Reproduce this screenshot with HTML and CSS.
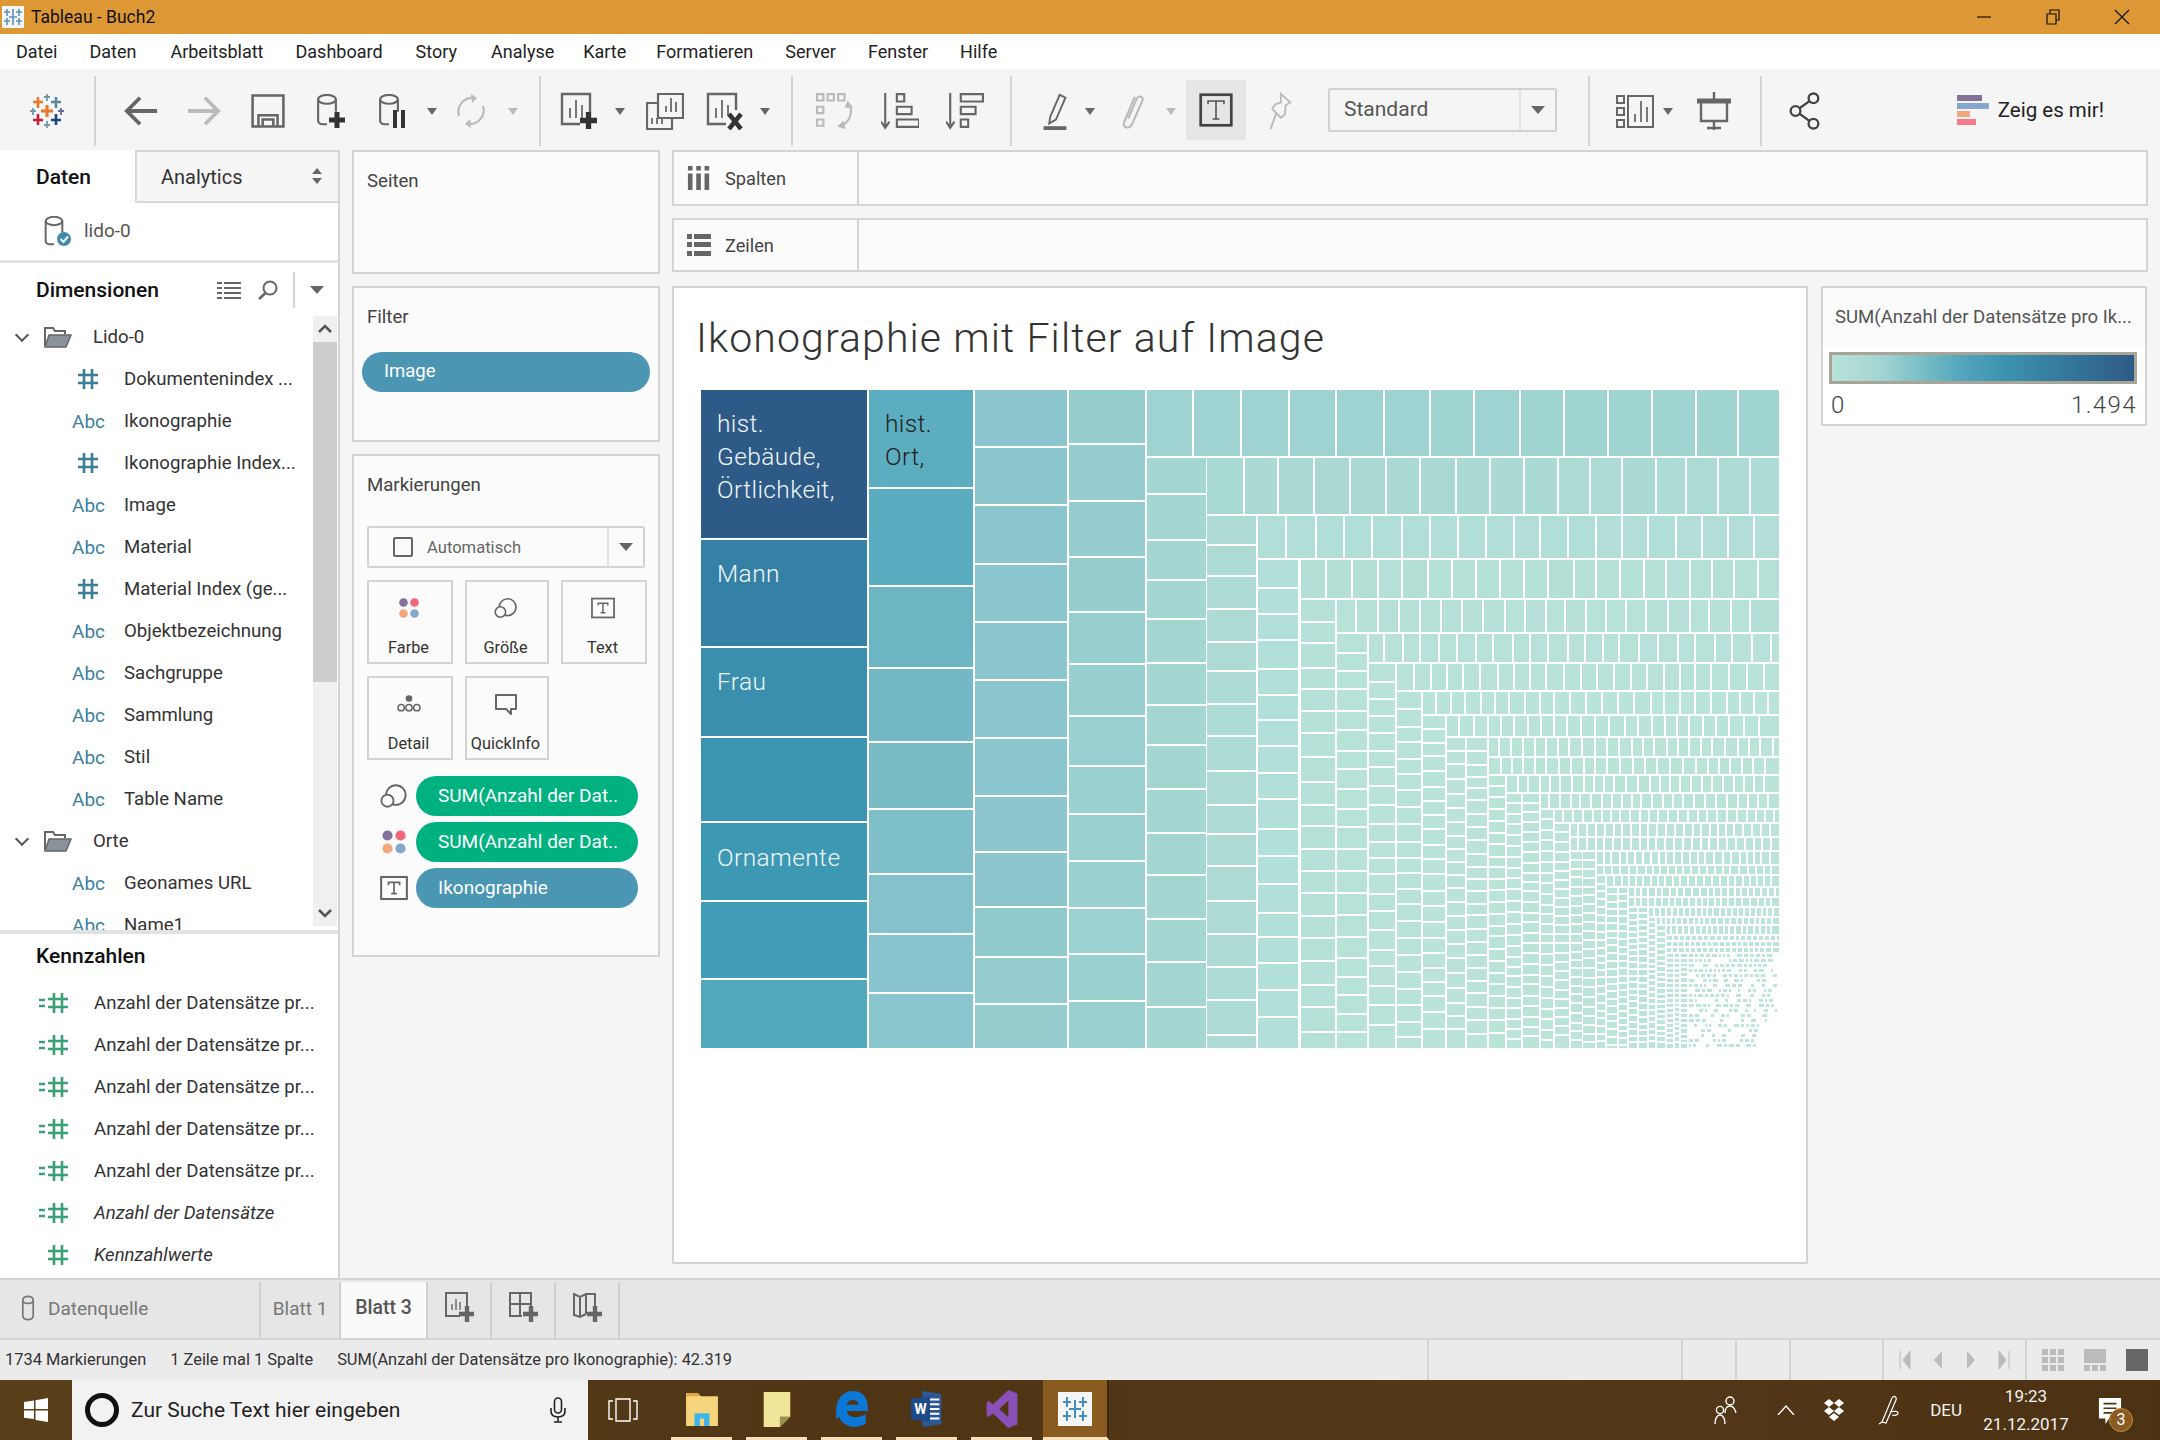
FILE: index.html
```html
<!DOCTYPE html>
<html>
<head>
    <meta charset="UTF-8">
    <title>Tableau - Buch2</title>
    <link rel="stylesheet" href="styles.css">
</head>
<body>
<svg class="defs" width="0" height="0">
    <defs>
        <symbol id="hash" viewBox="0 0 22 22">
            <path d="M7 1v20M15 1v20M1 7h20M1 15h20" fill="none" stroke="currentColor" stroke-width="2.6"/>
        </symbol>
        <symbol id="measure" viewBox="0 0 30 22">
            <path d="M0 8h6M0 14h6" fill="none" stroke="currentColor" stroke-width="2.4"/>
            <path d="M15 1v20M23 1v20M9 7h20M9 15h20" fill="none" stroke="currentColor" stroke-width="2.6"/>
        </symbol>
        <symbol id="folder" viewBox="0 0 28 22">
            <path d="M1 20V2h8l2 3h10v3" fill="none" stroke="#666" stroke-width="2"/>
            <path d="M1 21l4-12h22l-5 12z" fill="#8b929c" stroke="#666" stroke-width="1.5"/>
        </symbol>
        <symbol id="cyl" viewBox="0 0 24 36">
            <ellipse cx="12" cy="6" rx="10" ry="5" fill="none" stroke="currentColor" stroke-width="2.4"/>
            <path d="M2 6v24c0 2 2 4 5 4h5M22 6v14" fill="none" stroke="currentColor" stroke-width="2.4"/>
        </symbol>
        <symbol id="bubbles" viewBox="0 0 30 26">
            <circle cx="17" cy="12" r="10.5" fill="none" stroke="#666" stroke-width="2"/>
            <circle cx="8" cy="18" r="6.5" fill="#fbfbfb" stroke="#666" stroke-width="2"/>
        </symbol>
        <symbol id="dots" viewBox="0 0 28 28">
            <circle cx="7" cy="7" r="5.5" fill="#85729a"/>
            <circle cx="21" cy="7" r="5.5" fill="#f2667d"/>
            <circle cx="7" cy="21" r="5.5" fill="#f2a77c"/>
            <circle cx="21" cy="21" r="5.5" fill="#86a8cf"/>
        </symbol>
        <symbol id="tbox" viewBox="0 0 30 26">
            <rect x="1.2" y="1.2" width="27.6" height="23.6" fill="none" stroke="#666" stroke-width="2.2"/>
            <path d="M9 10V7h12v3M15 7v12M12 19h6" fill="none" stroke="#666" stroke-width="1.8"/>
        </symbol>
        <symbol id="plus" viewBox="0 0 16 16">
            <path d="M8 0v16M0 8h16" fill="none" stroke="#333" stroke-width="5"/>
        </symbol>
    </defs>
</svg>

<div class="window">
    <header class="titlebar">
        <div class="title-left">
            <svg class="app-icon" viewBox="0 0 22 22">
                <rect width="22" height="22" fill="#f4f4f4"/>
                <path d="M11 3v16M7 11h8M5 3v7M2 6h6M17 3v7M14 6h6M5 12v7M2 15h6M17 12v7M14 15h6" stroke="#5b94b8" stroke-width="1.6"/>
            </svg>
            <span>Tableau - Buch2</span>
        </div>
        <div class="win-controls">
            <svg viewBox="0 0 16 16"><path d="M1 8h14" stroke="#111" stroke-width="1.2"/></svg>
            <svg viewBox="0 0 16 16"><path d="M2 5h9v10H2zM5 5V1h9v10h-3" fill="none" stroke="#111" stroke-width="1.2"/></svg>
            <svg viewBox="0 0 16 16"><path d="M1 1l14 14M15 1L1 15" stroke="#111" stroke-width="1.2"/></svg>
        </div>
    </header>

    <nav class="menubar">
        <span>Datei</span><span>Daten</span><span>Arbeitsblatt</span><span>Dashboard</span><span>Story</span><span>Analyse</span><span>Karte</span><span>Formatieren</span><span>Server</span><span>Fenster</span><span>Hilfe</span>
    </nav>

    <div class="toolbar">
        <div class="tb-group tb-logo">
            <svg class="i-logo" viewBox="0 0 34 34">
                <path d="M17 11v12M11 17h12" stroke="#e8762b" stroke-width="3"/>
                <path d="M8 3v11M3 8h10" stroke="#e8762b" stroke-width="2.6"/>
                <path d="M26 3v11M21 8h10" stroke="#5b879b" stroke-width="2.6"/>
                <path d="M8 20v11M3 26h10" stroke="#c72037" stroke-width="2.6"/>
                <path d="M26 20v11M21 26h10" stroke="#1f447e" stroke-width="2.6"/>
                <path d="M17 0v7M14 3h6M17 27v7M14 31h6" stroke="#7199a9" stroke-width="1.8"/>
                <path d="M3 14v7M0 17h6" stroke="#7199a9" stroke-width="1.8"/>
                <path d="M31 14v7M28 17h6" stroke="#6a6a9a" stroke-width="1.8"/>
            </svg>
        </div>
        <div class="tb-group tb-nav">
            <svg class="i-34" viewBox="0 0 36 32"><path d="M35 16H4M17 2L3 16l14 14" fill="none" stroke="#666" stroke-width="4"/></svg>
            <svg class="i-34" viewBox="0 0 36 32"><path d="M1 16h31M19 2l14 14-14 14" fill="none" stroke="#bbb" stroke-width="4"/></svg>
            <svg class="i-34" viewBox="0 0 32 32"><path d="M1.5 1.5h29v29h-29z" fill="none" stroke="#666" stroke-width="2.4"/><path d="M7 30V20h18v10M11 30v-6h10v6" fill="none" stroke="#666" stroke-width="2.4"/></svg>
            <svg class="i-34" viewBox="0 0 32 34"><use href="#cyl" class="c-gray" width="24" height="32" x="0" y="0"/><use href="#plus" x="14" y="18" width="16" height="16"/></svg>
            <svg class="i-34" viewBox="0 0 32 34"><use href="#cyl" class="c-gray" width="24" height="32" x="0" y="0"/><path d="M18 16v18M26 16v18" stroke="#333" stroke-width="4"/></svg>
            <i class="caret"></i>
            <svg class="i-34" viewBox="0 0 34 34"><path d="M5 22C2 12 10 3 20 4M29 12c3 10-5 19-15 18" fill="none" stroke="#bbb" stroke-width="2.2"/><path d="M17 0l6 4-5 5zM17 34l-6-4 5-5z" fill="#bbb"/></svg>
            <i class="caret caret-off"></i>
        </div>
        <div class="tb-group tb-sheet">
            <svg class="i-38" viewBox="0 0 38 38"><path d="M20 32H2V2h28v18" fill="none" stroke="#666" stroke-width="2.4"/><path d="M10 26V16M16 26V8M22 26V13" stroke="#777" stroke-width="2"/><use href="#plus" x="20" y="20" width="17" height="17"/></svg>
            <i class="caret"></i>
            <svg class="i-38" viewBox="0 0 38 38"><path d="M12 2h25v24H12z" fill="#f5f5f5" stroke="#666" stroke-width="2.2"/><path d="M20 20v-6M25 20V6M30 20V10" stroke="#777" stroke-width="2"/><path d="M12 11H1v26h25V26" fill="none" stroke="#666" stroke-width="2.2"/><path d="M6 32v-6M11 32v-6M16 32v-6" stroke="#777" stroke-width="2"/></svg>
            <svg class="i-38" viewBox="0 0 38 38"><path d="M20 32H2V2h28v16" fill="none" stroke="#666" stroke-width="2.4"/><path d="M10 26V16M16 26V8M22 24V13" stroke="#777" stroke-width="2"/><path d="M23 22l12 15M35 22L23 37" stroke="#333" stroke-width="4.5"/></svg>
            <i class="caret"></i>
        </div>
        <div class="tb-group tb-sort">
            <svg class="i-38" viewBox="0 0 36 36"><g fill="none" stroke="#bbb" stroke-width="2"><path d="M1 2h6v6H1zM11 2h6v6h-6zM21 2h6v6h-6zM1 14h6v6H1zM1 26h6v6H1z"/><path d="M32 12c3 8 0 16-8 20"/></g><path d="M30 8l5 7-8 0zM20 33l6-6 2 8z" fill="#bbb"/></svg>
            <svg class="i-38" viewBox="0 0 36 36"><path d="M4 1v32M0 28l4 6 4-6" fill="none" stroke="#666" stroke-width="2"/><g fill="none" stroke="#666" stroke-width="2"><path d="M15 2h7v7h-7zM15 14h14v7H15zM15 26h21v7H15z"/></g></svg>
            <svg class="i-38" viewBox="0 0 36 36"><path d="M4 1v32M0 28l4 6 4-6" fill="none" stroke="#666" stroke-width="2"/><g fill="none" stroke="#666" stroke-width="2"><path d="M14 2h21v7H14zM14 14h14v7H14zM14 26h7v7h-7z"/></g></svg>
        </div>
        <div class="tb-group tb-format">
            <svg class="i-38" viewBox="0 0 30 40"><path d="M10 26L20 3l6 3-10 23-7 4z" fill="none" stroke="#666" stroke-width="2"/><path d="M3 38h24" stroke="#666" stroke-width="4"/></svg>
            <i class="caret"></i>
            <svg class="i-38" viewBox="0 0 30 40"><path d="M11 28L20 7c2-4 8-2 6 2L15 34c-3 6-11 3-8-3L18 5" fill="none" stroke="#bbb" stroke-width="2.2"/></svg>
            <i class="caret caret-off"></i>
            <span></span>
            <div class="tool-on"><svg class="i-34" viewBox="0 0 30 30"><rect x="1.5" y="1.5" width="27" height="27" fill="none" stroke="#444" stroke-width="2.4"/><path d="M8 10V7h14v3M15 7v16M12 23h6" fill="none" stroke="#555" stroke-width="1.4"/></svg></div>
            <svg class="i-38" viewBox="0 0 30 40"><path d="M17 2l10 9-5 3-1 10-4 3-9-9 3-5 6-2z" fill="none" stroke="#bbb" stroke-width="2"/><path d="M12 23l-6 16" stroke="#bbb" stroke-width="2"/></svg>
            <span></span>
            <div class="select">
                <span class="select-text">Standard</span>
                <span class="select-btn"><i class="caret caret-lg"></i></span>
            </div>
        </div>
        <div class="tb-group tb-view">
            <svg class="i-38" viewBox="0 0 38 38"><g fill="none" stroke="#666" stroke-width="2"><path d="M1 4h7v7H1zM1 16h7v7H1zM1 28h7v7H1zM12 4h25v31H12z"/></g><path d="M19 30v-8M25 30V9M31 30V15" stroke="#777" stroke-width="2"/></svg>
            <i class="caret"></i>
            <svg class="i-38" viewBox="0 0 36 38"><path d="M1 9h34" stroke="#666" stroke-width="5"/><path d="M5 11v18h26V11M18 0v8M18 29v9M11 36h14" fill="none" stroke="#666" stroke-width="2.4"/></svg>
        </div>
        <div class="tb-group tb-end">
            <svg class="i-38" viewBox="0 0 30 36"><g fill="none" stroke="#444" stroke-width="2.2"><circle cx="6" cy="18" r="4.6"/><circle cx="23" cy="6" r="4.6"/><circle cx="23" cy="30" r="4.6"/><path d="M9.8 15.4L19.2 8.6M9.8 20.6l9.4 6.8"/></g></svg>
            <div class="showme">
                <div class="showme-bars"><i class="b1"></i><i class="b2"></i><i class="b3"></i><i class="b4"></i></div>
                <span>Zeig es mir!</span>
            </div>
        </div>
    </div>

    <main class="workspace">
        <aside class="datapane">
            <div class="pane-tabs">
                <div class="pane-tab">Daten</div>
                <div class="pane-tab pane-tab-off">
                    <span>Analytics</span>
                    <svg class="updown" viewBox="0 0 12 16"><path d="M6 0l5 6H1zM6 16l5-6H1z" fill="#666"/></svg>
                </div>
            </div>
            <div class="source">
                <svg class="source-icon" viewBox="0 0 28 30"><use href="#cyl" class="c-gray" width="20" height="30"/><circle cx="20" cy="23" r="7" fill="#3d8bac"/><path d="M16.5 23l3 3 4.5-5.5" fill="none" stroke="#fff" stroke-width="2"/></svg>
                <span>lido-0</span>
            </div>
            <div class="dim-head">
                <h2>Dimensionen</h2>
                <svg class="i-list" viewBox="0 0 24 18"><path d="M0 2h5M7 2h17M0 7h5M7 7h17M0 12h5M7 12h17M0 17h5M7 17h17" stroke="#666" stroke-width="2"/></svg>
                <svg class="i-find" viewBox="0 0 20 20"><circle cx="12" cy="8" r="6.5" fill="none" stroke="#666" stroke-width="2"/><path d="M7.5 13L1 19" stroke="#666" stroke-width="2.6"/></svg>
                <i class="dim-sep"></i>
                <i class="caret caret-lg"></i>
            </div>
            <div class="dim-body">
                <ul class="fields">
                    <li class="folder"><i class="chev"></i><svg class="i-folder"><use href="#folder"/></svg><span>Lido-0</span></li>
                    <li><svg class="t-hash"><use href="#hash"/></svg><span>Dokumentenindex ...</span></li>
                    <li><b class="t-abc">Abc</b><span>Ikonographie</span></li>
                    <li><svg class="t-hash"><use href="#hash"/></svg><span>Ikonographie Index...</span></li>
                    <li><b class="t-abc">Abc</b><span>Image</span></li>
                    <li><b class="t-abc">Abc</b><span>Material</span></li>
                    <li><svg class="t-hash"><use href="#hash"/></svg><span>Material Index (ge...</span></li>
                    <li><b class="t-abc">Abc</b><span>Objektbezeichnung</span></li>
                    <li><b class="t-abc">Abc</b><span>Sachgruppe</span></li>
                    <li><b class="t-abc">Abc</b><span>Sammlung</span></li>
                    <li><b class="t-abc">Abc</b><span>Stil</span></li>
                    <li><b class="t-abc">Abc</b><span>Table Name</span></li>
                    <li class="folder"><i class="chev"></i><svg class="i-folder"><use href="#folder"/></svg><span>Orte</span></li>
                    <li><b class="t-abc">Abc</b><span>Geonames URL</span></li>
                    <li><b class="t-abc">Abc</b><span>Name1</span></li>
                </ul>
                <div class="scrollbar">
                    <div class="sb-btn"><svg viewBox="0 0 14 10"><path d="M1 8l6-6 6 6" fill="none" stroke="#555" stroke-width="2.6"/></svg></div>
                    <div class="sb-thumb"></div>
                    <div class="sb-rest"></div>
                    <div class="sb-btn"><svg viewBox="0 0 14 10"><path d="M1 2l6 6 6-6" fill="none" stroke="#555" stroke-width="2.6"/></svg></div>
                </div>
            </div>
            <div class="kz">
                <h2>Kennzahlen</h2>
                <ul class="fields measures">
                    <li><svg class="t-measure"><use href="#measure"/></svg><span>Anzahl der Datensätze pr...</span></li>
                    <li><svg class="t-measure"><use href="#measure"/></svg><span>Anzahl der Datensätze pr...</span></li>
                    <li><svg class="t-measure"><use href="#measure"/></svg><span>Anzahl der Datensätze pr...</span></li>
                    <li><svg class="t-measure"><use href="#measure"/></svg><span>Anzahl der Datensätze pr...</span></li>
                    <li><svg class="t-measure"><use href="#measure"/></svg><span>Anzahl der Datensätze pr...</span></li>
                    <li><svg class="t-measure"><use href="#measure"/></svg><span class="ital">Anzahl der Datensätze</span></li>
                    <li><svg class="t-measure-h"><use href="#hash"/></svg><span class="ital">Kennzahlwerte</span></li>
                </ul>
            </div>
        </aside>

        <section class="cards">
            <div class="card card-pages"><h3>Seiten</h3></div>
            <div class="card card-filter">
                <h3>Filter</h3>
                <div class="pill pill-blue pill-wide">Image</div>
            </div>
            <div class="card card-marks">
                <h3>Markierungen</h3>
                <div class="marktype">
                    <i class="mark-check"></i>
                    <span class="marktype-text">Automatisch</span>
                    <span class="marktype-btn"><i class="caret caret-lg"></i></span>
                </div>
                <div class="markgrid">
                    <div class="markbtn"><svg class="m-ic"><use href="#dots"/></svg><span>Farbe</span></div>
                    <div class="markbtn"><svg class="m-ic"><use href="#bubbles"/></svg><span>Größe</span></div>
                    <div class="markbtn"><svg class="m-ic"><use href="#tbox"/></svg><span>Text</span></div>
                    <div class="markbtn">
                        <svg class="m-ic" viewBox="0 0 26 22"><circle cx="13" cy="5" r="3.6" fill="#666"/><g fill="none" stroke="#666" stroke-width="1.6"><circle cx="4.5" cy="15" r="3.4"/><circle cx="13" cy="15" r="3.4"/><circle cx="21.5" cy="15" r="3.4"/></g></svg>
                        <span>Detail</span>
                    </div>
                    <div class="markbtn">
                        <svg class="m-ic" viewBox="0 0 24 22"><path d="M2 2h20v14h-5v5l-5-5H2z" fill="none" stroke="#666" stroke-width="2" stroke-linejoin="round"/></svg>
                        <span>QuickInfo</span>
                    </div>
                </div>
                <div class="markrow"><svg class="mr-ic"><use href="#bubbles"/></svg><div class="pill pill-green">SUM(Anzahl der Dat..</div></div>
                <div class="markrow"><svg class="mr-ic"><use href="#dots"/></svg><div class="pill pill-green">SUM(Anzahl der Dat..</div></div>
                <div class="markrow"><svg class="mr-ic"><use href="#tbox"/></svg><div class="pill pill-blue">Ikonographie</div></div>
            </div>
        </section>

        <section class="sheet">
            <div class="shelf">
                <div class="shelf-label">
                    <svg class="shelf-ic" viewBox="0 0 24 26"><path d="M0 0h5v5H0zM9 0h5v5H9zM18 0h5v5h-5zM0 8h5v18H0zM9 8h5v18H9zM18 8h5v18h-5z" fill="#666"/></svg>
                    <span>Spalten</span>
                </div>
            </div>
            <div class="shelf">
                <div class="shelf-label">
                    <svg class="shelf-ic" viewBox="0 0 24 22"><path d="M0 0h5v5H0zM7 0h17v5H7zM0 8h5v5H0zM7 8h17v5H7zM0 17h5v5H0zM7 17h17v5H7z" fill="#666"/></svg>
                    <span>Zeilen</span>
                </div>
            </div>
            <div class="sheet-main">
                <div class="viz">
                    <h1>Ikonographie mit Filter auf Image</h1>
                    <div class="treemap" id="treemap">
                        <div class="tm-label tm-a">hist.<br>Gebäude,<br>Örtlichkeit,</div>
                        <div class="tm-label tm-b">Mann</div>
                        <div class="tm-label tm-c">Frau</div>
                        <div class="tm-label tm-d">Ornamente</div>
                        <div class="tm-label tm-e">hist.<br>Ort,</div>
                    </div>
                </div>
                <div class="legend">
                    <div class="legend-title">SUM(Anzahl der Datensätze pro Ik...</div>
                    <div class="legend-bar"></div>
                    <div class="legend-vals"><span>0</span><span>1.494</span></div>
                </div>
            </div>
        </section>
    </main>

    <div class="tabsbar">
        <div class="tab tab-source">
            <svg class="i-tabcyl" viewBox="0 0 16 30"><path d="M2 6v18c0 6 12 6 12 0V6c0-6-12-6-12 0c0 5 12 5 12 0" fill="none" stroke="#777" stroke-width="2"/></svg>
            <span>Datenquelle</span>
        </div>
        <div class="tab tab-b1">Blatt 1</div>
        <div class="tab tab-b3">Blatt 3</div>
        <div class="tab tab-add"><svg class="i-add" viewBox="0 0 30 30"><path d="M16 24H2V1h21v13" fill="none" stroke="#666" stroke-width="2"/><path d="M8 18v-6M12 18V7M16 18v-8" stroke="#777" stroke-width="1.6"/><path d="M23 14v16M15 22h16" stroke="#666" stroke-width="4.4"/></svg></div>
        <div class="tab tab-add"><svg class="i-add" viewBox="0 0 30 30"><path d="M14 24H2V1h21v13M2 12h21M12 1v23" fill="none" stroke="#666" stroke-width="2"/><path d="M23 14v16M15 22h16" stroke="#666" stroke-width="4.4"/></svg></div>
        <div class="tab tab-add"><svg class="i-add" viewBox="0 0 30 30"><path d="M14 22l-6 3-6-2V2l6 3 6-3 9 0v12M8 5v20M14 2v20" fill="none" stroke="#666" stroke-width="2"/><path d="M23 14v16M15 22h16" stroke="#666" stroke-width="4.4"/></svg></div>
    </div>

    <footer class="statusbar">
        <div class="status-text">
            <span>1734 Markierungen</span>
            <span>1 Zeile mal 1 Spalte</span>
            <span>SUM(Anzahl der Datensätze pro Ikonographie): 42.319</span>
        </div>
        <div class="status-cells"><i class="sc1"></i><i class="sc2"></i><i class="sc3"></i><i class="sc4"></i></div>
        <div class="status-nav">
            <svg viewBox="0 0 12 18"><path d="M1 0v18M11 0v18L4 9z" fill="#bbb" stroke="#bbb"/></svg>
            <svg viewBox="0 0 12 18"><path d="M10 0v18L2 9z" fill="#bbb"/></svg>
            <svg viewBox="0 0 12 18"><path d="M2 0v18l8-9z" fill="#bbb"/></svg>
            <svg viewBox="0 0 12 18"><path d="M11 0v18M1 0v18l7-9z" fill="#bbb" stroke="#bbb"/></svg>
        </div>
        <div class="status-view">
            <svg viewBox="0 0 22 22"><path d="M0 0h6v6H0zM8 0h6v6H8zM16 0h6v6h-6zM0 8h6v6H0zM8 8h6v6H8zM16 8h6v6h-6zM0 16h6v6H0zM8 16h6v6H8zM16 16h6v6h-6z" fill="#bbb"/></svg>
            <svg viewBox="0 0 22 22"><path d="M0 0h22v14H0zM0 16h6v6H0zM8 16h6v6H8zM16 16h6v6h-6z" fill="#bbb"/></svg>
            <svg viewBox="0 0 22 22"><path d="M0 0h22v22H0z" fill="#666"/></svg>
        </div>
    </footer>

    <div class="taskbar">
        <div class="task-start">
            <svg viewBox="0 0 24 24"><path d="M0 4l10-1.5V11H0zM11.5 2.3L24 0v11H11.5zM0 12.5h10V21L0 19.7zM11.5 12.5H24V24l-12.5-2z" fill="#fff"/></svg>
        </div>
        <div class="task-search">
            <i class="cortana"></i>
            <span>Zur Suche Text hier eingeben</span>
            <svg class="mic" viewBox="0 0 16 26"><rect x="4.5" y="1" width="7" height="15" rx="3.5" fill="none" stroke="#222" stroke-width="1.6"/><path d="M1 11v3c0 4 3 6 7 6s7-2 7-6v-3M8 20v5M4 25h8" fill="none" stroke="#222" stroke-width="1.6"/></svg>
        </div>
        <div class="task-view">
            <svg viewBox="0 0 30 26"><path d="M8 2h14v22H8zM5 4H1v18h4M25 4h4v18h-4" fill="none" stroke="#fff" stroke-width="1.4"/></svg>
        </div>
        <div class="task-app">
            <svg viewBox="0 0 32 34"><path d="M1 2h11l3 3h16v28H1z" fill="#f6d47c"/><path d="M1 2h11l2 3H1z" fill="#e0a83c"/><path d="M9 33V21h14v12h-5v-7h-4v7z" fill="#3cb5ea"/></svg>
        </div>
        <div class="task-app">
            <svg viewBox="0 0 30 40"><path d="M1 2h28v26L18 39H1z" fill="#f1e59a"/><path d="M29 28L18 39V28z" fill="#9a9157"/></svg>
        </div>
        <div class="task-app">
            <svg viewBox="0 0 32 36"><path d="M1 20C1 8 8 1 17 1c9 0 14 7 14 15v4H11c1 6 9 8 18 3v9c-10 6-23 2-25-7-1 1-2 1-3 4zM11 14h11c0-6-10-6-11 0z" fill="#0b78d8"/></svg>
        </div>
        <div class="task-app">
            <svg viewBox="0 0 34 40"><path d="M12 1l20 3v32l-20 3z" fill="#2b5796"/><path d="M20 10h10M20 15h10M20 20h10M20 25h10M20 30h10" stroke="#fff" stroke-width="2"/><path d="M0 9l20-2v26L0 31z" fill="#1e4a8a"/><text class="word-w" x="3.5" y="25">W</text></svg>
        </div>
        <div class="task-app">
            <svg viewBox="0 0 34 42"><path d="M24 0l10 4v34l-10 4L7 26l-5 4-2-2V14l2-2 5 4zM24 12l-10 9 10 9z" fill="#8a50b8"/></svg>
        </div>
        <div class="task-tableau">
            <div class="tile">
                <svg viewBox="0 0 28 28"><path d="M14 5v18M8 14h12M6 2v10M2 7h8M22 2v10M18 7h8M6 16v10M2 21h8M22 16v10M18 21h8" stroke="#3f8fc0" stroke-width="2"/></svg>
            </div>
        </div>
        <div class="tray">
            <svg class="tr-people" viewBox="0 0 24 30"><g fill="none" stroke="#fff" stroke-width="1.4"><circle cx="16" cy="6" r="4"/><path d="M11 18c0-4 2-7 5-7s5 3 6 7"/><circle cx="6" cy="15" r="3.6"/><path d="M1 29c0-5 2-9 5-9s5 4 5 9"/></g></svg>
            <svg class="tr-chev" viewBox="0 0 18 10"><path d="M1 10l8-9 8 9" fill="none" stroke="#fff" stroke-width="1.4"/></svg>
            <svg class="tr-box" viewBox="0 0 22 22"><path d="M6 0l5 4-5 4-5-4zM16 0l5 4-5 4-5-4zM6 8l5 4-5 4-5-4zM16 8l5 4-5 4-5-4zM11 14l5 4-5 4-5-4z" fill="#fff"/></svg>
            <svg class="tr-pen" viewBox="0 0 22 30"><path d="M4 27L14 3c2-3 5-1 4 2L8 28zM4 27l-3 2M12 17c3-1 8-1 8 1s-3 3-6 2" fill="none" stroke="#fff" stroke-width="1.2"/></svg>
            <span class="tr-lang">DEU</span>
            <div class="tr-clock"><span>19:23</span><span>21.12.2017</span></div>
            <div class="tr-note">
                <svg viewBox="0 0 26 30"><path d="M1 1h24v22H12l-4 6v-6H1z" fill="#fff"/><path d="M6 7h14M6 12h14M6 17h14" stroke="#4f3514" stroke-width="1.8"/></svg>
                <b>3</b>
            </div>
        </div>
    </div>
</div>
<script src="treemap.js"></script>
</body>
</html>
```

FILE: styles.css
```css
* {
    margin: 0;
    padding: 0;
    box-sizing: border-box;
}

html, body {
    width: 2160px;
    height: 1440px;
    overflow: hidden;
}

body {
    font-family: Roboto, "Liberation Sans", sans-serif;
    font-size: 18px;
    color: #333;
    background: #f5f5f5;
}

ul {
    list-style: none;
}

i {
    display: block;
}

.defs {
    display: block;
    height: 0;
}

.window {
    display: flex;
    flex-direction: column;
    height: 1440px;
}

/* title + menu */
.titlebar {
    display: flex;
    justify-content: space-between;
    align-items: center;
    height: 34px;
    flex: none;
    background: #dd9835;
    font-size: 17.5px;
    color: #111;
}

.title-left {
    display: flex;
    align-items: center;
    gap: 7px;
    padding-left: 2px;
}

.app-icon {
    width: 22px;
    height: 22px;
}

.win-controls {
    display: flex;
    gap: 53px;
    padding-right: 30px;
}

.win-controls svg {
    width: 16px;
    height: 16px;
}

.menubar {
    display: flex;
    align-items: center;
    gap: 32px;
    height: 35px;
    flex: none;
    padding-left: 16px;
    background: #fff;
    color: #222;
}

/* the original menu font runs a bit different per word */
.menubar span:nth-child(3) {
    margin-left: 2px;
}

.menubar span:nth-child(5) {
    margin-left: 1px;
}

.menubar span:nth-child(6) {
    margin-left: 2px;
}

.menubar span:nth-child(7) {
    margin-left: -3px;
}

.menubar span:nth-child(8) {
    margin-left: -2px;
}

/* toolbar */
.toolbar {
    display: flex;
    height: 81px;
    flex: none;
    padding-top: 7px;
    padding-bottom: 4px;
    background: #f5f5f5;
}

.tb-group {
    display: grid;
    align-items: center;
    justify-items: center;
    height: 70px;
    border-right: 2px solid #d4d4d4;
}

.tb-logo {
    grid-template-columns: 94px;
    width: 96px;
}

.tb-nav {
    grid-template-columns: 62px 64px 64px 62px 62px 16px 62px 22px;
    width: 445px;
    padding-left: 14px;
}

.tb-sheet {
    grid-template-columns: 60px 22px 68px 52px 28px;
    width: 252px;
    padding-left: 8px;
}

.tb-sort {
    grid-template-columns: 60px 70px 60px;
    width: 219px;
    padding-left: 12px;
}

.tb-format {
    grid-template-columns: 50px 20px 64px 14px 8px 60px 66px 16px 229px;
    width: 578px;
    padding-left: 18px;
}

.tb-view {
    grid-template-columns: 38px 28px 64px;
    width: 172px;
    padding-left: 26px;
}

.tb-end {
    display: flex;
    flex: 1;
    justify-content: space-between;
    padding: 0 56px 0 24px;
    border-right: 0;
}

.i-logo {
    width: 34px;
    height: 34px;
}

.i-34 {
    width: 34px;
    height: 34px;
}

.i-38 {
    width: 38px;
    height: 38px;
}

.c-gray {
    color: #666;
}

.caret {
    width: 0;
    height: 0;
    border-left: 5px solid transparent;
    border-right: 5px solid transparent;
    border-top: 7px solid #666;
}

.caret-off {
    border-top-color: #bbb;
}

.caret-lg {
    border-left-width: 7px;
    border-right-width: 7px;
    border-top-width: 8px;
}

.tool-on {
    display: flex;
    justify-content: center;
    align-items: center;
    width: 60px;
    height: 60px;
    margin-bottom: 2px;
    background: #e6e6e6;
}

.select {
    display: flex;
    width: 229px;
    height: 44px;
    margin-bottom: 3px;
    border: 2px solid #d0d0d0;
    border-radius: 2px;
}

.select-text {
    flex: 1;
    padding-left: 14px;
    line-height: 38px;
    font-size: 21px;
    color: #555;
}

.select-btn {
    display: flex;
    justify-content: center;
    align-items: center;
    width: 36px;
    border-left: 2px solid #e2e2e2;
}

.showme {
    display: flex;
    align-items: center;
    gap: 9px;
    margin-bottom: 3px;
    font-size: 20.5px;
    color: #222;
}

.showme-bars {
    display: flex;
    flex-direction: column;
    gap: 2px;
    width: 32px;
}

.showme-bars i {
    height: 6px;
}

.showme-bars .b1 {
    width: 25px;
    background: #85729a;
}

.showme-bars .b2 {
    width: 32px;
    background: #86a8cf;
}

.showme-bars .b3 {
    width: 13px;
    background: #f2a77c;
}

.showme-bars .b4 {
    width: 19px;
    background: #f97b8b;
}

/* main area */
.workspace {
    display: flex;
    flex: 1;
    min-height: 0;
}

.datapane {
    display: flex;
    flex-direction: column;
    width: 340px;
    flex: none;
    background: #fff;
    border-right: 2px solid #d4d4d4;
}

.pane-tabs {
    display: flex;
    height: 53px;
    flex: none;
}

.pane-tab {
    width: 135px;
    padding-left: 36px;
    line-height: 54px;
    font-size: 21px;
    font-weight: 500;
    color: #111;
}

.pane-tab-off {
    display: flex;
    justify-content: space-between;
    align-items: center;
    flex: 1;
    padding: 0 15px 0 24px;
    background: #f5f5f5;
    border: 2px solid #d8d8d8;
    border-right: 0;
    font-size: 20px;
    font-weight: 400;
    color: #333;
}

.updown {
    width: 12px;
    height: 16px;
    margin-bottom: 2px;
}

.source {
    display: flex;
    align-items: center;
    gap: 12px;
    height: 60px;
    flex: none;
    padding: 0 0 2px 44px;
    border-bottom: 3px solid #e2e2e2;
    font-size: 19px;
    color: #555;
}

.source-icon {
    width: 28px;
    height: 30px;
}

.dim-head {
    display: flex;
    align-items: center;
    height: 53px;
    flex: none;
    padding-left: 36px;
}

h2 {
    font-size: 21px;
    font-weight: 500;
    color: #111;
}

.i-list {
    width: 24px;
    height: 18px;
    margin-left: 58px;
}

.i-find {
    width: 20px;
    height: 20px;
    margin-left: 17px;
}

.dim-sep {
    width: 2px;
    height: 36px;
    margin: 0 15px;
    background: #d4d4d4;
}

.dim-body {
    display: flex;
    height: 618px;
    flex: none;
    overflow: hidden;
    border-bottom: 4px solid #e2e2e2;
}

.fields {
    flex: 1;
}

.fields li {
    display: flex;
    align-items: center;
    height: 42px;
    white-space: nowrap;
    font-size: 18.6px;
    color: #333;
}

.t-abc {
    width: 52px;
    margin-left: 72px;
    flex: none;
    font-size: 19px;
    font-weight: 400;
    color: #3d7f9e;
}

.t-hash {
    width: 22px;
    height: 22px;
    margin-left: 77px;
    margin-right: 25px;
    flex: none;
    color: #3b7d99;
}

.folder .chev {
    width: 10px;
    height: 10px;
    margin: -4px 17px 0 17px;
    border-right: 2px solid #555;
    border-bottom: 2px solid #555;
    transform: rotate(45deg);
    flex: none;
}

.i-folder {
    width: 28px;
    height: 22px;
    margin-right: 21px;
    flex: none;
}

.scrollbar {
    display: flex;
    flex-direction: column;
    width: 24px;
    height: 610px;
    margin-right: 1px;
    flex: none;
    background: #f0f0f0;
}

.sb-btn {
    display: flex;
    justify-content: center;
    align-items: center;
    height: 26px;
}

.sb-btn svg {
    width: 14px;
    height: 10px;
}

.sb-thumb {
    height: 340px;
    background: #cdcdcd;
}

.sb-rest {
    flex: 1;
}

.kz {
    flex: 1;
    padding-top: 8px;
}

.kz h2 {
    height: 40px;
    padding-left: 36px;
    line-height: 29px;
}

.t-measure {
    width: 30px;
    height: 22px;
    margin-left: 39px;
    margin-right: 25px;
    flex: none;
    color: #3b9f77;
}

.t-measure-h {
    width: 22px;
    height: 22px;
    margin-left: 47px;
    margin-right: 25px;
    flex: none;
    color: #3b9f77;
}

.ital {
    font-style: italic;
}

/* shelves column */
.cards {
    display: flex;
    flex-direction: column;
    gap: 12px;
    width: 308px;
    margin-left: 12px;
    flex: none;
}

.card {
    flex: none;
    padding: 18px 13px 0;
    background: #fbfbfb;
    border: 2px solid #d4d4d4;
}

h3 {
    font-size: 18.6px;
    font-weight: 400;
    color: #444;
}

.card-pages {
    height: 124px;
}

.card-filter {
    height: 156px;
}

.card-marks {
    height: 503px;
    padding-top: 18px;
}

.pill {
    height: 40px;
    padding-left: 22px;
    border-radius: 20px;
    line-height: 39px;
    color: #fff;
    white-space: nowrap;
}

.pill-blue {
    background: #4b96b3;
}

.pill-green {
    background: #00b180;
}

.pill-wide {
    width: 288px;
    margin: 24px 0 0 -5px;
    font-size: 18.5px;
}

.marktype {
    display: flex;
    align-items: center;
    height: 42px;
    margin-top: 30px;
    padding-left: 24px;
    border: 2px solid #d4d4d4;
    border-radius: 2px;
}

.mark-check {
    width: 20px;
    height: 20px;
    border: 2px solid #666;
    border-radius: 2px;
}

.marktype-text {
    flex: 1;
    padding-left: 14px;
    font-size: 16.6px;
    color: #666;
}

.marktype-btn {
    display: flex;
    justify-content: center;
    align-items: center;
    width: 36px;
    height: 38px;
    border-left: 2px solid #e2e2e2;
}

.markgrid {
    display: grid;
    grid-template-columns: 86px 84px 86px;
    grid-auto-rows: 84px;
    gap: 12px;
    width: 280px;
    margin-top: 12px;
    margin-bottom: 13px;
}

.markbtn {
    display: flex;
    flex-direction: column;
    align-items: center;
    justify-content: space-between;
    padding: 15px 3px 5px 0;
    border: 2px solid #d4d4d4;
    font-size: 16.3px;
    color: #333;
}

.m-ic {
    width: 24px;
    height: 22px;
}

.markrow {
    display: flex;
    align-items: center;
    height: 46px;
    padding-left: 13px;
}

.mr-ic {
    width: 28px;
    height: 26px;
    margin: 0 8px 0 0;
    flex: none;
}

.markrow .pill {
    width: 222px;
    font-size: 19px;
}

/* sheet */
.sheet {
    display: flex;
    flex-direction: column;
    flex: 1;
    margin-left: 12px;
    margin-right: 12px;
    min-width: 0;
}

.shelf {
    display: flex;
    height: 56px;
    margin-bottom: 12px;
    flex: none;
    background: #fbfbfb;
    border: 2px solid #d4d4d4;
}

.shelf + .shelf {
    height: 54px;
    margin-bottom: 14px;
}

.shelf-label {
    display: flex;
    align-items: center;
    width: 185px;
    padding-left: 13px;
    border-right: 2px solid #d4d4d4;
    font-size: 18.2px;
    color: #444;
}

.shelf-ic {
    width: 24px;
    height: 24px;
    margin-right: 14px;
}

.sheet-main {
    display: flex;
    gap: 13px;
    align-items: flex-start;
}

.viz {
    width: 1136px;
    height: 978px;
    padding: 0 0 0 27px;
    background: #fff;
    border: 2px solid #d4d4d4;
}

.viz h1 {
    height: 102px;
    padding-top: 25px;
    margin-left: -5px;
    font-size: 41px;
    font-weight: 300;
    line-height: 50px;
    letter-spacing: 1.1px;
    color: #333;
}

.treemap {
    position: relative;
    width: 1078px;
    height: 658px;
}

.treemap svg {
    display: block;
    width: 1078px;
    height: 658px;
    shape-rendering: crispEdges;
}

.tm-label {
    position: absolute;
    left: 16px;
    font-size: 24.5px;
    font-weight: 300;
    line-height: 33px;
    color: #eef6f8;
    letter-spacing: 0.4px;
}

.tm-a {
    top: 17px;
}

.tm-b {
    top: 167px;
}

.tm-c {
    top: 275px;
}

.tm-d {
    top: 451px;
}

.tm-e {
    left: 184px;
    top: 17px;
    color: #222;
}

.legend {
    width: 326px;
    height: 140px;
    flex: none;
    background: #fff;
    border: 2px solid #d4d4d4;
}

.legend-title {
    height: 57px;
    padding-left: 12px;
    line-height: 58px;
    font-size: 18.6px;
    color: #555;
    white-space: nowrap;
    background: #fbfbfb;
}

.legend-bar {
    height: 32px;
    margin: 7px 8px 0 6px;
    border: 3px solid #a8a498;
    background: linear-gradient(to right, #b8e2d8 0%, #a3d6d2 16%, #55a7bd 42%, #3b91b0 58%, #2d5a87 100%);
}

.legend-vals {
    display: flex;
    justify-content: space-between;
    padding: 7px 8px 0 8px;
    font-size: 24px;
    font-weight: 300;
    letter-spacing: 1.4px;
    color: #444;
}

/* bottom */
.tabsbar {
    display: flex;
    height: 60px;
    flex: none;
    background: #e6e6e6;
    border-top: 2px solid #d4d4d4;
    font-size: 19px;
    color: #777;
}

.tab {
    display: flex;
    align-items: center;
    justify-content: center;
    padding-bottom: 4px;
    border-right: 2px solid #d0d0d0;
    margin-top: 2px;
}

.tab-source {
    width: 261px;
    justify-content: flex-start;
    gap: 10px;
    padding-left: 18px;
}

.i-tabcyl {
    width: 20px;
    height: 26px;
}

.tab-b1 {
    width: 80px;
}

.tab-b3 {
    width: 87px;
    padding-bottom: 6px;
    background: #fafafa;
    font-size: 19.5px;
    font-weight: 500;
    color: #555;
}

.tab-add {
    width: 64px;
    padding-bottom: 6px;
}

.i-add {
    width: 30px;
    height: 30px;
}

.statusbar {
    display: flex;
    align-items: stretch;
    height: 42px;
    flex: none;
    background: #ebebeb;
    border-top: 2px solid #d4d4d4;
    font-size: 16.4px;
    color: #333;
}

.status-text {
    display: flex;
    gap: 24px;
    width: 1427px;
    padding-left: 5px;
    line-height: 40px;
    white-space: nowrap;
}

.status-cells {
    display: flex;
}

.status-cells i {
    border-left: 2px solid #d4d4d4;
}

.status-cells .sc1 {
    width: 254px;
}

.status-cells .sc2 {
    width: 54px;
}

.status-cells .sc3 {
    width: 54px;
}

.status-cells .sc4 {
    width: 93px;
}

.status-nav {
    display: flex;
    align-items: center;
    gap: 21px;
    width: 143px;
    padding-left: 15px;
    border-left: 2px solid #d4d4d4;
}

.status-nav svg {
    width: 12px;
    height: 18px;
}

.status-view {
    display: flex;
    align-items: center;
    gap: 20px;
    padding-left: 15px;
    border-left: 2px solid #d4d4d4;
}

.status-view svg {
    width: 22px;
    height: 22px;
}

/* windows taskbar */
.taskbar {
    display: flex;
    height: 60px;
    flex: none;
    background: linear-gradient(to right, #59401a, #4f3514 40%, #54381a 70%, #4b3212);
}

.task-start {
    display: flex;
    justify-content: center;
    align-items: center;
    width: 72px;
}

.task-start svg {
    width: 24px;
    height: 24px;
}

.task-search {
    display: flex;
    align-items: center;
    width: 516px;
    padding-left: 13px;
    background: #f2f2f2;
    font-size: 21px;
    color: #222;
}

.cortana {
    width: 34px;
    height: 34px;
    margin-right: 12px;
    border: 5px solid #111;
    border-radius: 50%;
}

.task-search span {
    flex: 1;
}

.mic {
    width: 16px;
    height: 26px;
    margin-right: 22px;
}

.task-view {
    display: flex;
    justify-content: center;
    align-items: center;
    width: 69px;
    margin-right: 14px;
}

.task-view svg {
    width: 30px;
    height: 26px;
}

.task-app {
    display: flex;
    justify-content: center;
    align-items: center;
    width: 61px;
    margin-right: 14px;
    border-bottom: 3px solid #f9dfb8;
}

.task-app svg {
    width: 34px;
    height: 38px;
}

.word-w {
    font-size: 15px;
    font-weight: 700;
    fill: #fff;
}

.task-tableau {
    display: flex;
    justify-content: center;
    align-items: center;
    width: 66px;
    margin-left: -3px;
    background: #8a5b20;
    border-bottom: 3px solid #f9dfb8;
    border-right: 2px solid #3c280e;
}

.tile {
    display: flex;
    justify-content: center;
    align-items: center;
    width: 34px;
    height: 34px;
    background: #f5f5f5;
}

.tile svg {
    width: 28px;
    height: 28px;
}

.tray {
    display: flex;
    align-items: center;
    justify-content: flex-end;
    flex: 1;
    padding-right: 36px;
    color: #f2f2f2;
}

.tr-people {
    width: 24px;
    height: 30px;
}

.tr-chev {
    width: 18px;
    height: 10px;
    margin-left: 39px;
}

.tr-box {
    width: 22px;
    height: 22px;
    margin-left: 28px;
}

.tr-pen {
    width: 22px;
    height: 30px;
    margin-left: 33px;
}

.tr-lang {
    margin-left: 30px;
    font-size: 17px;
}

.tr-clock {
    display: flex;
    flex-direction: column;
    align-items: center;
    gap: 8px;
    width: 90px;
    margin-left: 19px;
    font-size: 17px;
}

.tr-note {
    position: relative;
    width: 26px;
    height: 30px;
    margin-left: 27px;
    margin-top: 4px;
}

.tr-note svg {
    width: 24px;
    height: 28px;
}

.tr-note b {
    position: absolute;
    left: 11px;
    top: 11px;
    width: 24px;
    height: 24px;
    border-radius: 50%;
    background: #8a5b20;
    border: 1px solid #c08a3a;
    font-size: 16px;
    font-weight: 400;
    line-height: 22px;
    text-align: center;
    color: #fff;
}
```

FILE: treemap.js
```js
// draws the 1734 marks of the treemap. Screen coordinates, the viewBox maps them.
var RIGHT = 1781, BOTTOM = 1051;
var seed = 7;

function rnd() {
    seed = (seed * 16807) % 2147483647;
    return seed / 2147483647;
}

var stops = [
    [0, [189, 229, 218]], [300, [186, 227, 217]], [768, [182, 225, 216]], [1000, [179, 223, 215]],
    [1904, [171, 218, 212]], [2904, [160, 212, 209]], [4158, [149, 205, 207]], [5336, [139, 197, 205]]
];

function colorFor(area) {
    for (var i = 1; i < stops.length; i++) {
        if (area <= stops[i][0]) {
            var a = stops[i - 1], b = stops[i], t = (area - a[0]) / (b[0] - a[0]);
            return "rgb(" + [0, 1, 2].map(function (k) {
                return Math.round(a[1][k] + (b[1][k] - a[1][k]) * t);
            }).join(",") + ")";
        }
    }
    return "rgb(139,197,205)";
}

var out = [];

function cell(x, y, w, h, fill) {
    if (w <= 0 || h <= 0) return;
    out.push('<rect x="' + x + '" y="' + y + '" width="' + w + '" height="' + h + '" fill="' + fill + '"/>');
}

// cut a..b in pieces of about avg
function cuts(a, b, avg) {
    var res = [a], p = a;
    while (b - p > avg * 1.5) {
        p += Math.max(2, Math.round(avg + (rnd() - 0.5) * avg * 0.22));
        res.push(p);
    }
    res.push(b);
    return res;
}

function colExact(x, w, ys, colors) {
    for (var i = 0; i < ys.length - 1; i++) {
        cell(x, ys[i], w, ys[i + 1] - ys[i] - 2, colors ? colors[i] : colorFor(w * (ys[i + 1] - ys[i])));
    }
}

function stripExact(xs, y, h) {
    for (var i = 0; i < xs.length - 1; i++) {
        cell(xs[i], y, xs[i + 1] - xs[i] - 2, h, colorFor((xs[i + 1] - xs[i]) * h));
    }
}

function strip(x, y, h, avg) {
    stripExact(cuts(x, RIGHT, avg), y, h);
}

function col(x, w, y, avg) {
    var ys = cuts(y, BOTTOM, avg);
    for (var i = 0; i < ys.length - 1; i++) {
        cell(x, ys[i], w, ys[i + 1] - ys[i] - 2, colorFor(w * avg));
    }
}

colExact(701, 166, [391, 541, 649, 739, 824, 903, 981, 1051],
    ["#2d5a87", "#3581a5", "#3a8fae", "#3b94b1", "#3d98b4", "#419cb8", "#52a9be"]);
colExact(869, 104, [391, 490, 588, 670, 744, 811, 876, 936, 995, 1051],
    ["#5dadc0", "#5aacc0", "#6cb5c2", "#73b8c4", "#7abcc6", "#7fbfc9", "#83c2cb", "#87c4cd", "#8ac6ce"]);
colExact(975, 92, [391, 449, 507, 566, 624, 682, 740, 798, 854, 909, 959, 1006, 1051]);
colExact(1069, 76, [391, 446, 503, 559, 614, 666, 718, 768, 816, 863, 910, 956, 1003, 1051]);

stripExact([1147, 1194, 1242, 1290, 1337, 1385, 1431, 1475, 1521, 1565, 1609, 1653, 1697, 1739, RIGHT], 391, 66);
col(1147, 59, 459, 42);
stripExact([1207, 1245, 1279, 1315, 1351, 1387, 1421, 1457, 1491, 1525, 1559, 1591, 1623, 1657, 1687, 1719, 1751, RIGHT], 459, 56);
col(1207, 49, 517, 32);
stripExact([1258, 1287, 1317, 1345, 1373, 1403, 1431, 1459, 1487, 1515, 1541, 1569, 1597, 1623, 1649, 1677, 1703, 1729, 1755, RIGHT], 517, 42);
col(1258, 40, 561, 27);
stripExact([1301, 1327, 1353, 1379, 1403, 1429, 1453, 1477, 1501, 1525, 1549, 1575, 1597, 1621, 1645, 1667, 1691, 1713, 1735, 1759, RIGHT], 561, 38);
col(1301, 34, 601, 23);
strip(1337, 601, 32, 20.5);
col(1337, 30, 635, 20);
strip(1369, 635, 28, 18.5);
col(1369, 26, 665, 18);
strip(1397, 665, 26, 16.5);
col(1397, 24, 693, 16.5);
strip(1423, 693, 22, 15);
col(1423, 22, 717, 15);
strip(1447, 717, 20, 14);
col(1447, 18, 739, 13.5);
col(1467, 20, 739, 12.5);
strip(1489, 739, 18, 12);
strip(1489, 759, 16, 12);
col(1489, 16, 777, 11.5);
strip(1507, 777, 16, 11);
col(1507, 14, 795, 10.5);
col(1523, 16, 795, 10.5);
strip(1541, 795, 14, 10);
col(1541, 12, 811, 10.5);
strip(1555, 811, 12, 9.5);
col(1555, 14, 825, 9.5);
strip(1571, 825, 12, 8.5);
strip(1571, 839, 12, 8.5);
col(1571, 11, 853, 9);
col(1583, 12, 853, 9);
strip(1597, 853, 12, 8);
strip(1597, 867, 8, 8);
col(1597, 8, 877, 8);
strip(1607, 877, 10, 7.5);
col(1607, 10, 889, 7.5);
col(1619, 8, 889, 7);
strip(1629, 889, 8, 7);
strip(1629, 899, 8, 7);
col(1629, 8, 909, 6.5);
col(1639, 8, 909, 6.5);
strip(1649, 909, 8, 6);
col(1649, 6, 919, 6);
strip(1657, 919, 6, 6);
col(1657, 8, 927, 5.5);
strip(1667, 927, 8, 6);
strip(1667, 937, 4, 6);
strip(1667, 943, 4, 6);
strip(1667, 949, 4, 6);
col(1667, 6, 955, 5);
col(1675, 4, 955, 5);
col(1681, 6, 955, 5);

// the smallest marks at the bottom right only leave specks
for (var y = 955; y < 1046; y += 5) {
    var p = 1689;
    var drop = 0.15 + (y - 955) / 91 * 0.45;
    while (p < 1778) {
        var w = 2 + Math.round(rnd() * 3);
        var limit = y > 1010 ? 1772 - (y - 1010) * 0.4 : 1778;
        if (rnd() > drop && p + w < limit) cell(p, y, w, 3, "rgb(189,229,218)");
        p += w + 2;
    }
}

var box = document.getElementById("treemap");
box.insertAdjacentHTML("afterbegin",
    '<svg viewBox="701 391 1078 658">' + out.join("") + "</svg>");
```
